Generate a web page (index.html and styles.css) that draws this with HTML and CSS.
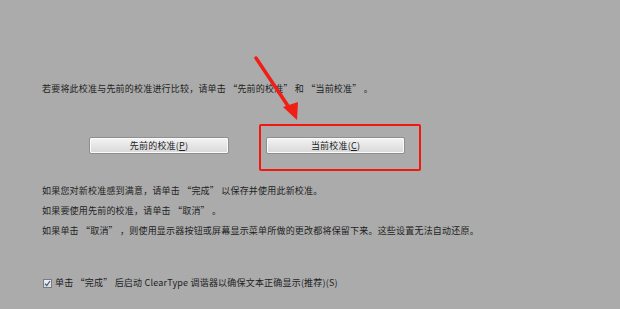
FILE: index.html
```html
<!DOCTYPE html>
<html lang="zh-CN">
<head>
<meta charset="utf-8">
<link rel="stylesheet" href="styles.css">
</head>
<body>
<div class="page">
  <p class="intro">若要将此校准与先前的校准进行比较，请单击 “先前的校准” 和 “当前校准” 。</p>
  <div class="buttons">
    <button class="btn btn-prev">先前的校准(<u>P</u>)</button>
    <button class="btn btn-cur">当前校准(<u>C</u>)</button>
  </div>
  <div class="notes">
    <p class="note n1">如果您对新校准感到满意，请单击 “完成” 以保存并使用此新校准。</p>
    <p class="note n2">如果要使用先前的校准，请单击 “取消” 。</p>
    <p class="note n3">如果单击 “取消” ，则使用显示器按钮或屏幕显示菜单所做的更改都将保留下来。这些设置无法自动还原。</p>
  </div>
  <label class="check">
    <span class="box"><svg width="7" height="7" viewBox="0 0 7 7"><path d="M1 3.8 L2.8 5.6 L6 1" fill="none" stroke="#3a5a9a" stroke-width="1.3"/></svg></span>
    <span>单击 “完成” 后启动 ClearType 调谐器以确保文本正确显示(推荐)(S)</span>
  </label>
</div>
<div class="highlight"></div>
<svg class="arrow" width="620" height="309" viewBox="0 0 620 309">
  <line x1="256" y1="58" x2="290" y2="109" stroke="#f01e14" stroke-width="3.5" stroke-linecap="round"/>
  <polygon points="297,120 283,107 298,102" fill="#f01e14"/>
</svg>
</body>
</html>
```

FILE: styles.css
```css
html, body {
  margin: 0;
  padding: 0;
}
body {
  width: 620px;
  height: 309px;
  background: #ababab;
  font-family: "Noto Sans CJK SC", "Noto Sans", sans-serif;
  font-size: 9px;
  letter-spacing: 0.2px;
  color: #1e1e1e;
  position: relative;
  overflow: hidden;
}
.page {
  padding: 83px 0 0 42px;
}
p {
  margin: 0;
  line-height: 12px;
  white-space: nowrap;
}
.buttons {
  display: flex;
  gap: 37px;
  margin-top: 42px;
  margin-left: 47px;
}
.btn {
  height: 17px;
  padding: 0;
  border: 1px solid #8e8e8e;
  border-radius: 2px;
  background: linear-gradient(#f4f4f4, #e6e6e6 50%, #d8d8d8);
  box-shadow: inset 0 0 0 1px #fbfbfb;
  font-family: inherit;
  font-size: 9px;
  letter-spacing: 0.2px;
  color: #1e1e1e;
  line-height: 15px;
}
.btn-prev { width: 140px; }
.btn-cur { width: 139px; }
.notes {
  margin-top: 31px;
  display: flex;
  flex-direction: column;
  gap: 8px;
}
.check {
  display: flex;
  align-items: center;
  gap: 3px;
  margin-top: 40px;
  margin-left: 1px;
  line-height: 12px;
}
.box {
  width: 7px;
  height: 7px;
  border: 1px solid #7a7a7a;
  background: linear-gradient(#f0f0f0, #dcdcdc);
  display: flex;
}
.highlight {
  position: absolute;
  left: 259px;
  top: 124px;
  width: 158px;
  height: 43px;
  border: 2px solid #f2170f;
  border-radius: 2px;
}
.arrow {
  position: absolute;
  left: 0;
  top: 0;
}
```
